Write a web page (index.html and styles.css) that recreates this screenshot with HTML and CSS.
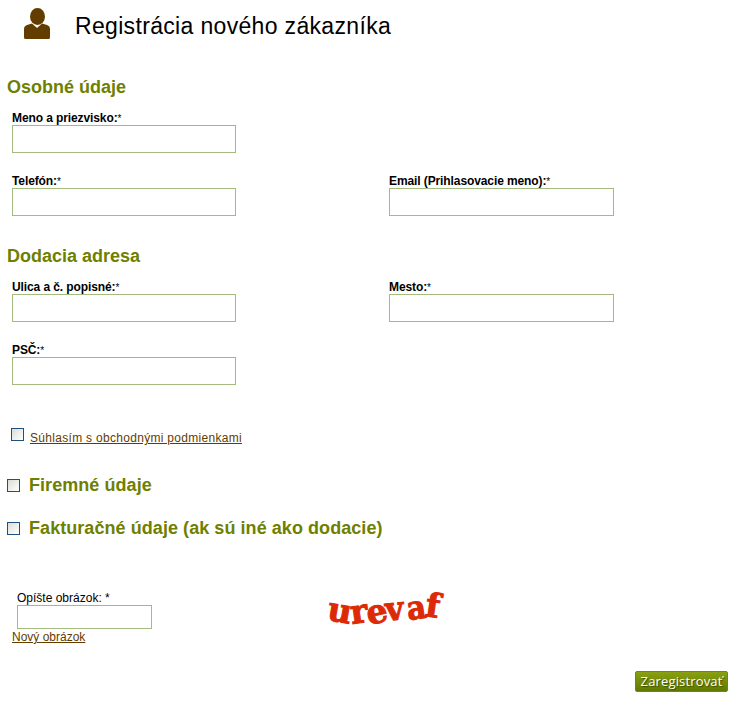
FILE: index.html
```html
<!DOCTYPE html>
<html>
<head>
  <meta charset="utf-8">
  <title>Registrácia nového zákazníka</title>
  <link rel="stylesheet" href="styles.css">
</head>
<body>
  <div class="header">
    <svg class="user-icon" width="26" height="31" viewBox="0 0 26 31">
      <ellipse cx="13.5" cy="8.5" rx="7.5" ry="8.5" fill="#633c00"/>
      <path d="M1 31 Q0 31 0 29 L0 21 Q0 18 3 17 L8 15.5 L13 20 L18 15.5 L23 17 Q26 18 26 21 L26 29 Q26 31 25 31 Z" fill="#633c00"/>
    </svg>
    <h1>Registrácia nového zákazníka</h1>
  </div>

  <h2 class="section first">Osobné údaje</h2>
  <div class="fields">
    <div class="field">
      <label>Meno a priezvisko:<span class="req">*</span></label>
      <input type="text">
    </div>
    <div class="field"></div>
    <div class="field">
      <label>Telefón:<span class="req">*</span></label>
      <input type="text">
    </div>
    <div class="field">
      <label>Email (Prihlasovacie meno):<span class="req">*</span></label>
      <input type="text">
    </div>
  </div>

  <h2 class="section second">Dodacia adresa</h2>
  <div class="fields">
    <div class="field">
      <label>Ulica a č. popisné:<span class="req">*</span></label>
      <input type="text">
    </div>
    <div class="field">
      <label>Mesto:<span class="req">*</span></label>
      <input type="text">
    </div>
    <div class="field">
      <label>PSČ:<span class="req">*</span></label>
      <input type="text">
    </div>
  </div>

  <div class="agree">
    <span class="check"></span>
    <a href="#">Súhlasím s obchodnými podmienkami</a>
  </div>

  <div class="toggle firm">
    <span class="check"></span>
    <h3>Firemné údaje</h3>
  </div>
  <div class="toggle billing">
    <span class="check"></span>
    <h3>Fakturačné údaje (ak sú iné ako dodacie)</h3>
  </div>

  <div class="captcha">
    <div class="captcha-form">
      <label>Opíšte obrázok: *</label>
      <input type="text">
      <a href="#">Nový obrázok</a>
    </div>
    <div class="captcha-img">
      <span class="c1">u</span><span class="c2">r</span><span class="c3">e</span><span class="c4">v</span><span class="c5">a</span><span class="c6">f</span>
    </div>
  </div>

  <div class="actions">
    <button type="button">Zaregistrovať</button>
  </div>
</body>
</html>
```

FILE: styles.css
```css
html, body {
  margin: 0;
  padding: 0;
  background: #fff;
}

body {
  font-family: "Liberation Sans", Arial, sans-serif;
  font-size: 12px;
  color: #000;
  height: 714px;
  overflow: hidden;
}

.header {
  display: flex;
  align-items: flex-start;
  padding: 7px 0 0 24px;
}

.user-icon {
  display: block;
  margin-top: 1px;
}

h1 {
  margin: 6px 0 0 25px;
  font-size: 23px;
  line-height: 26px;
  font-weight: normal;
  letter-spacing: 0.33px;
}

.section {
  margin: 0 0 0 7px;
  font-size: 18px;
  line-height: 20px;
  font-weight: bold;
  color: #6e8000;
}

.section.first {
  margin-top: 38px;
}

.section.second {
  margin-top: 30px;
}

.fields {
  display: grid;
  grid-template-columns: 377px 240px;
  row-gap: 19px;
  margin: 12px 0 0 12px;
}

.field {
  height: 44px;
}

.field label {
  display: block;
  height: 16px;
  font-weight: bold;
  line-height: 18px;
  letter-spacing: -0.1px;
}

.field input {
  display: block;
  width: 224px;
  height: 28px;
  margin: 0;
  padding: 0;
  box-sizing: border-box;
  border: 1px solid #a3bb7f;
  background: #fff;
}

.field:nth-child(even) input {
  width: 225px;
}

.req {
  font-weight: normal;
  font-size: 10px;
}

.check {
  display: block;
  flex: none;
  width: 13px;
  height: 13px;
  box-sizing: border-box;
  border: 1px solid #1c5180;
  background: linear-gradient(135deg, #dcdcd6, #fff);
}

.agree {
  display: flex;
  align-items: flex-start;
  margin: 43px 0 0 11px;
}

.agree a {
  margin: 3px 0 0 6px;
  letter-spacing: 0.3px;
  line-height: 14px;
  color: #633c00;
}

.toggle {
  display: flex;
  align-items: center;
  margin-left: 7px;
}

.toggle h3 {
  margin: 0 0 0 9px;
  font-size: 18px;
  line-height: 20px;
  font-weight: bold;
  letter-spacing: 0.06px;
  color: #6e8000;
}

.firm {
  margin-top: 30px;
}

.billing {
  margin-top: 23px;
}

.captcha {
  display: flex;
  align-items: flex-start;
  margin: 53px 0 0 12px;
}

.captcha-form {
  width: 317px;
}

.captcha-form label {
  display: block;
  margin-left: 5px;
  line-height: 14px;
}

.captcha-form input {
  display: block;
  width: 135px;
  height: 24px;
  margin: 0 0 0 5px;
  padding: 0;
  box-sizing: border-box;
  border: 1px solid #a3bb7f;
}

.captcha-form a {
  display: inline-block;
  margin-top: 1px;
  line-height: 14px;
  color: #633c00;
}

/* the picture is a warped word, set it letter by letter */
.captcha-img {
  display: flex;
  align-items: baseline;
  height: 34px;
  margin-left: -1px;
  padding-top: 3px;
  font-family: "DejaVu Serif", serif;
  font-weight: bold;
  font-size: 33px;
  line-height: 34px;
  color: #dc2a06;
  -webkit-text-stroke: 1px #dc2a06;
}

.captcha-img span {
  display: block;
}

.c1 { transform: rotate(10deg); margin-right: -2px; }
.c2 { transform: rotate(-8deg) translateY(1px); margin-right: -1px; }
.c3 { transform: rotate(-12deg) translateY(1px); margin-right: -2px; }
.c4 { transform: rotate(-6deg) translateY(-2px) scaleX(0.95); margin-right: 1px; }
.c5 { transform: rotate(-8deg) translateY(-3px) scaleX(0.9); margin-right: -2px; }
.c6 { transform: rotate(8deg) translateY(-5px); }

.actions {
  display: flex;
  justify-content: flex-end;
  margin: 27px 22px 0 0;
}

.actions button {
  width: 93px;
  height: 21px;
  padding: 0;
  border: 1px solid #6e8a00;
  border-radius: 2px;
  background: linear-gradient(to bottom, #8aa012, #5f7a00);
  color: #fff;
  font-family: "Open Sans", sans-serif;
  font-size: 13px;
  letter-spacing: 0.15px;
  line-height: 19px;
  text-shadow: 1px 1px 1px #3c4d00;
}
```
